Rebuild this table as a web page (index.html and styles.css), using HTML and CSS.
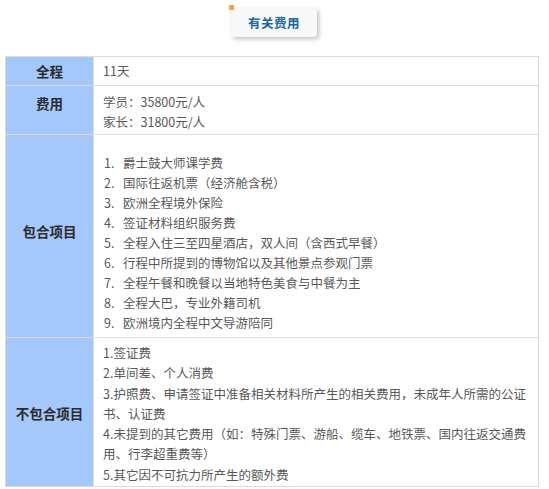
FILE: index.html
```html
<!DOCTYPE html>
<html lang="zh-CN">
<head>
<meta charset="utf-8">
<link rel="stylesheet" href="styles.css">
</head>
<body>
<div class="header">
  <div class="badge"><span class="dot"></span>有关费用</div>
</div>
<table class="fees">
  <tr class="r1">
    <th class="label">全程</th>
    <td class="value">11天</td>
  </tr>
  <tr class="r2">
    <th class="label">费用</th>
    <td class="value">学员<span class="colon">：</span>35800元/人<br>家长<span class="colon">：</span>31800元/人</td>
  </tr>
  <tr class="r3">
    <th class="label">包合项目</th>
    <td class="value">
      <ol class="list">
        <li><span class="num">1.</span>爵士鼓大师课学费</li>
        <li><span class="num">2.</span>国际往返机票（经济舱含税）</li>
        <li><span class="num">3.</span>欧洲全程境外保险</li>
        <li><span class="num">4.</span>签证材料组织服务费</li>
        <li><span class="num">5.</span>全程入住三至四星酒店，双人间（含西式早餐）</li>
        <li><span class="num">6.</span>行程中所提到的博物馆以及其他景点参观门票</li>
        <li><span class="num">7.</span>全程午餐和晚餐以当地特色美食与中餐为主</li>
        <li><span class="num">8.</span>全程大巴，专业外籍司机</li>
        <li><span class="num">9.</span>欧洲境内全程中文导游陪同</li>
      </ol>
    </td>
  </tr>
  <tr class="r4">
    <th class="label">不包合项目</th>
    <td class="value">1.签证费<br>2.单间差、个人消费<br>3.护照费、申请签证中准备相关材料所产生的相关费用，未成年人所需的公证书、认证费<br>4.未提到的其它费用（如<span class="colon">：</span>特殊门票、游船、缆车、地铁票、国内往返交通费用、行李超重费等）<br>5.其它因不可抗力所产生的额外费</td>
  </tr>
</table>
</body>
</html>
```

FILE: styles.css
```css
html, body {
  margin: 0;
  padding: 0;
  background: #ffffff;
}
body {
  font-family: "Noto Sans CJK SC", "Microsoft YaHei", sans-serif;
  font-size: 12.5px;
  color: #595959;
}
.header {
  display: flex;
  justify-content: center;
  padding-top: 8px;
  padding-right: 1px;
}
.badge {
  position: relative;
  width: 86px;
  height: 29px;
  line-height: 29px;
  text-align: center;
  background: #f7f8fa;
  border-radius: 3px;
  box-shadow: 2px 2px 4px rgba(0, 0, 0, 0.25);
  color: #1b679e;
  font-weight: bold;
  font-size: 12.5px;
  letter-spacing: 0.5px;
}
.dot {
  position: absolute;
  left: -2px;
  top: -3px;
  width: 5px;
  height: 5px;
  background: #f6a04a;
}
.colon {
  font-family: "Noto Sans CJK JP", "Noto Sans CJK SC", sans-serif;
}
.fees {
  margin: 19px 0 0 5px;
  width: 534px;
  border-collapse: collapse;
  border: 1px solid #dcdcdc;
}
.fees th, .fees td {
  border: 1px solid #dcdcdc;
}
.label {
  width: 88px;
  box-sizing: border-box;
  background: #a5c8fb;
  color: #2b2b2b;
  font-weight: bold;
  font-size: 13.5px;
  text-align: center;
  vertical-align: middle;
  padding: 0;
  border-color: #c9d9ef;
}
.value {
  padding: 4px 10px 4px 9px;
  line-height: 20px;
  vertical-align: top;
}
.r2 .value { padding-top: 6px; padding-bottom: 2px; }
.r2 .label { padding-bottom: 15px; }
.r3 .value { padding-top: 18px; padding-bottom: 4px; }
.r3 .label { padding-bottom: 11px; }
.r4 .value { padding-top: 5px; padding-bottom: 1px; line-height: 20.3px; }
.r4 .label { padding-top: 2px; }
.list {
  list-style: none;
  margin: 0;
  padding: 0 0 0 1px;
}
.list li {
  display: flex;
}
.num {
  width: 19px;
  flex: none;
}
```
